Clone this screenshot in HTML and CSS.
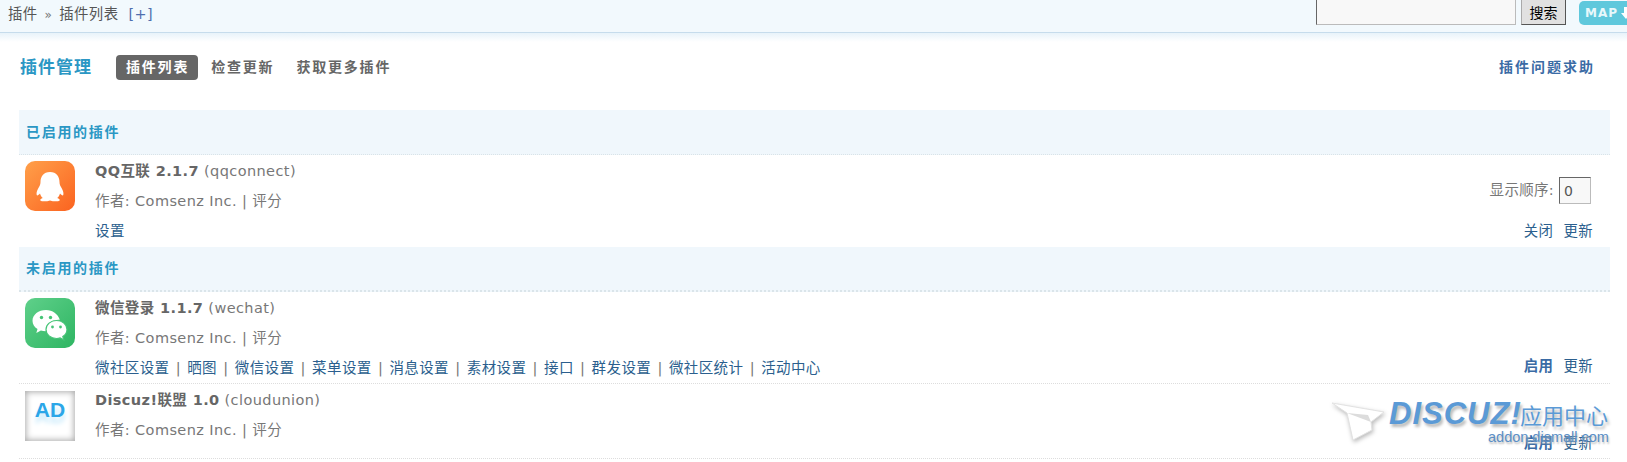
FILE: index.html
```html
<!DOCTYPE html>
<html lang="zh">
<head>
<meta charset="utf-8">
<title>插件列表</title>
<link rel="stylesheet" href="styles.css">
</head>
<body>
<header class="topbar">
  <div class="crumbs">插件 <span class="sep">»</span> 插件列表 <a class="plus">[+]</a></div>
  <div class="tools">
    <input class="search" type="text">
    <button class="go">搜索</button>
    <span class="map">MAP<svg width="16" height="14" viewBox="0 0 16 14"><path d="M5 1h4v6h3l-5 6-5-6h3z" fill="#fff"/></svg></span>
  </div>
</header>
<main class="content">
  <div class="head">
    <h1 class="title">插件管理</h1>
    <nav class="tabs">
      <a class="tab active">插件列表</a>
      <a class="tab">检查更新</a>
      <a class="tab">获取更多插件</a>
    </nav>
    <a class="help">插件问题求助</a>
  </div>

  <h2 class="section first">已启用的插件</h2>
  <section class="row">
    <svg class="icon" viewBox="0 0 50 50">
      <defs><linearGradient id="qq" x1="0" y1="0" x2="1" y2="1"><stop offset="0" stop-color="#ffa04a"/><stop offset="1" stop-color="#fb6320"/></linearGradient></defs>
      <rect width="50" height="50" rx="10" fill="url(#qq)"/>
      <path d="M25 11c-6.500 0-9.500 4.800-9.500 10 0 2-.4 3.200-1.500 5-1.500 2.500-3 5.500-2.300 8 .5 1 2 0 3.300-1.500.6 2 1.600 3.500 2.800 4.500-1.800.7-3 1.500-2.500 2.500 1 1 6 1.300 9.700 0 3.700 1.300 8.700 1 9.700 0 .5-1-.7-1.800-2.500-2.500 1.200-1 2.200-2.500 2.800-4.500 1.300 1.500 2.800 2.500 3.300 1.500.7-2.500-.8-5.500-2.300-8-1.100-1.800-1.500-3-1.500-5 0-5.200-3-10-9.500-10z" fill="#fff"/>
    </svg>
    <div class="info">
      <div class="line"><b>QQ互联 2.1.7</b> (qqconnect)</div>
      <div class="line">作者: Comsenz Inc. | 评分</div>
      <div class="line"><a>设置</a></div>
    </div>
    <div class="side">
      <label class="order">显示顺序: <input class="num" type="text" value="0"></label>
      <div class="acts"><a>关闭</a><a>更新</a></div>
    </div>
  </section>

  <h2 class="section second">未启用的插件</h2>
  <section class="row dotted">
    <svg class="icon" viewBox="0 0 50 50">
      <defs><linearGradient id="wx" x1="0" y1="0" x2="1" y2="1"><stop offset="0" stop-color="#5fd08a"/><stop offset="1" stop-color="#2eb562"/></linearGradient></defs>
      <rect width="50" height="50" rx="10" fill="url(#wx)"/>
      <path d="M21 12c-7.500 0-13.500 4.700-13.500 10.800 0 3.400 1.900 6.300 5 8.300l-1.200 4 4.600-2.500c1.500.4 3.100.7 5 .7 0-7 5.600-11.500 13-11.500h.9C33 16 27.500 12 21 12z" fill="#fff"/>
      <path d="M42 31.500c0-5-4.700-9-10.500-9s-10.500 4-10.500 9 4.700 9 10.500 9c1.300 0 2.500-.2 3.700-.6l3.600 2-1-3.300c2.600-1.700 4.200-4.200 4.200-7.100z" fill="#fff" stroke="#45c476" stroke-width="1.200"/>
      <circle cx="16.500" cy="19.500" r="1.700" fill="#45c476"/><circle cx="25.500" cy="19.500" r="1.700" fill="#45c476"/>
      <circle cx="27.500" cy="29" r="1.400" fill="#45c476"/><circle cx="35.500" cy="29" r="1.400" fill="#45c476"/>
    </svg>
    <div class="info">
      <div class="line"><b>微信登录 1.1.7</b> (wechat)</div>
      <div class="line">作者: Comsenz Inc. | 评分</div>
      <div class="line links"><a>微社区设置</a> | <a>晒图</a> | <a>微信设置</a> | <a>菜单设置</a> | <a>消息设置</a> | <a>素材设置</a> | <a>接口</a> | <a>群发设置</a> | <a>微社区统计</a> | <a>活动中心</a></div>
    </div>
    <div class="side">
      <div class="acts"><a class="strong">启用</a><a>更新</a></div>
    </div>
  </section>
  <section class="row dotted short">
    <div class="adicon"><span class="adtext">AD</span></div>
    <div class="info">
      <div class="line"><b>Discuz!联盟 1.0</b> (cloudunion)</div>
      <div class="line">作者: Comsenz Inc. | 评分</div>
    </div>
    <div class="side">
      <div class="acts"><a class="strong">启用</a><a>更新</a></div>
    </div>
  </section>
</main>
<div class="mark">
  <svg class="plane" width="58" height="44" viewBox="0 0 58 44">
    <path d="M1 3l52 9-13 10 1 8-19 10-6-27z" fill="#fff" stroke="#e2e2e2" stroke-width="1"/>
    <path d="M16 13l24 9-3-7z" fill="#dcdcdc"/>
  </svg>
  <div class="marktext">
    <div class="markline"><span class="brand">DISCUZ!</span><span class="cn">应用中心</span></div>
    <div class="url">addon.dismall.com</div>
  </div>
</div>
</body>
</html>
```

FILE: styles.css
```css
* { box-sizing: border-box; }
html, body { margin: 0; padding: 0; }
body {
  position: relative;
  height: 462px;
  overflow: hidden;
  background: #fff;
  color: #777;
  font: 14.500px/1.5 "DejaVu Sans", "Noto Sans CJK SC", sans-serif;
}
a { color: #2b5f8e; }
.topbar {
  height: 33px;
  display: flex;
  justify-content: space-between;
  align-items: flex-end;
  overflow: hidden;
  padding: 0 0 8px 8px;
  background: #f2f9fd;
  border-bottom: 1px solid #c6dcec;
}
.crumbs { color: #555; font-size: 14.400px; line-height: 26px; height: 26px; margin-bottom: -3px; letter-spacing: .4px; }
.sep { color: #777; font-size: 12px; margin: 0 2px; }
.plus { color: #4f6fae; margin-left: 5px; }
.tools { display: flex; align-items: flex-end; flex: none; gap: 5px; margin-right: -13px; margin-bottom: -1px; }
.search {
  width: 200px; height: 26px; padding: 0;
  background: #f8f8f8;
  border: 1px solid #bbb; border-left-color: #666; border-top-color: #666;
}
.go {
  width: 45px; height: 26px; padding: 0;
  background: #e1e1e1; color: #000;
  border: 1px solid #aaa; border-right-color: #555; border-bottom-color: #555;
  font: 14px "Noto Sans CJK SC", sans-serif;
}
.map {
  display: flex; align-items: center; gap: 1px;
  width: 61px; height: 24px; margin-left: 8px; padding-left: 6px;
  border-radius: 5px;
  background: #5fc8dc; color: #e8f8fb;
  font: bold 12px "DejaVu Sans", sans-serif;
  letter-spacing: 1px;
}
.content {
  padding: 0 17px 0 19px;
  background: linear-gradient(#e8f3fa, #fff 9px);
}
.head { display: flex; align-items: center; height: 77px; padding-bottom: 8px; }
.title { margin: 0 24px 0 1px; color: #2b97c4; font-size: 17px; font-weight: bold; letter-spacing: 1px; }
.tabs { display: flex; gap: 3px; }
.tab { padding: 0 9px 0 10px; height: 25px; line-height: 25px; border-radius: 4px; color: #666; font-weight: bold; font-size: 14px; letter-spacing: 1.800px; }
.tab.active { background: #666; color: #fff; }
.help { margin-left: auto; margin-right: 15px; color: #3a6ba5; font-weight: bold; font-size: 14px; letter-spacing: 2px; }
.section {
  margin: 0;
  padding: 0 7px;
  background: #f0f7fc;
  color: #2b97c4;
  font-size: 14px;
  font-weight: bold;
  letter-spacing: 1.700px;
  border-bottom: 1px dotted #d9e3e8;
}
.first { height: 45px; line-height: 44px; }
.second { height: 45px; line-height: 42px; border-bottom: 2px dotted #dbe5ea; }
.row { display: flex; height: 92px; padding-left: 6px; }
.dotted { border-bottom: 1px dotted #ddd; }
.short { height: 75px; }
.icon, .adicon { flex: none; width: 50px; height: 50px; margin-top: 6px; }
.adicon { margin-top: 7px; }
.info { flex: 1; margin-left: 20px; }
.line { height: 30.500px; line-height: 30px; white-space: nowrap; font-size: 14.500px; letter-spacing: .4px; }
.line:first-child { line-height: 32px; }
.line b { color: #666; }
.links { word-spacing: 1.200px; }
.side { display: flex; flex-direction: column; justify-content: flex-end; align-items: flex-end; padding: 0 17px 6px 0; }
.dotted .side { padding-bottom: 7px; }
.short .side { padding-bottom: 5px; }
.order { display: flex; align-items: center; gap: 5px; margin: 0 2px 17px 0; font-size: 14.500px; letter-spacing: .3px; }
.num { width: 32px; height: 27px; padding: 0 0 0 4px; background: #f8f8f8; color: #555; font: 14px "DejaVu Sans", sans-serif; border: 1px solid #bbb; border-left-color: #666; border-top-color: #666; }
.acts { display: flex; gap: 10px; height: 20px; line-height: 20px; font-size: 14.400px; letter-spacing: .4px; }
.strong { color: #3a6ba5; font-weight: bold; }
.adicon {
  display: flex; align-items: center; justify-content: center;
  background: #fff;
  box-shadow: inset 0 0 6px 1px #a9a9a9;
}
.adtext { color: #2ba6e8; font: bold 21px/1 "Liberation Sans", sans-serif; margin-top: -14px; text-shadow: 0 6px 5px #c4e8fa; }
.mark { position: absolute; left: 1331px; top: 400px; display: flex; align-items: flex-start; }
.plane { flex: none; filter: drop-shadow(1px 2px 2px #bbb); }
.marktext { flex: none; }
.markline { display: flex; align-items: center; height: 28px; white-space: nowrap; color: #5b9ad6; text-shadow: 2px 3px 3px #bbb; }
.brand { font: italic bold 31px/28px "Liberation Sans", sans-serif; letter-spacing: 1px; width: 131px; }
.cn { font: 22px/28px "Noto Sans CJK SC", sans-serif; }
.url { margin: 0 0 0 99px; width: 130px; height: 18px; color: #5b8fc6; font: 14.500px/18px "Liberation Sans", sans-serif; text-shadow: 1px 2px 2px #bbb; white-space: nowrap; }
```
